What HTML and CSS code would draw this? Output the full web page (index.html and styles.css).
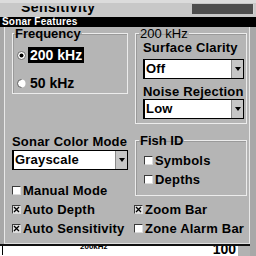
FILE: index.html
```html
<!DOCTYPE html>
<html>
<head>
<meta charset="utf-8">
<link rel="stylesheet" href="styles.css">
</head>
<body>
<div class="top">
  <div class="sens-clip"><span class="sens">Sensitivity</span></div>
  <div class="top-dark"></div>
</div>
<div class="title">Sonar Features</div>
<div class="panel">
  <fieldset class="group freq">
    <legend class="lg-freq">Frequency</legend>
    <div class="radio-row first">
      <svg class="radio" width="9" height="9" viewBox="0 0 9 9"><circle cx="4.5" cy="4.5" r="4" fill="#fff" stroke="#6a6a6a"/><circle cx="4.5" cy="4.5" r="2" fill="#000"/></svg>
      <span class="opt selected">200 kHz</span>
    </div>
    <div class="radio-row second">
      <svg class="radio" width="9" height="9" viewBox="0 0 9 9"><circle cx="4.5" cy="4.5" r="4" fill="#fff"/><path d="M4.5 0.5 A4 4 0 0 0 4.5 8.5" fill="none" stroke="#5a5a5a"/></svg>
      <span class="opt">50 kHz</span>
    </div>
  </fieldset>
  <fieldset class="group khz">
    <legend class="lg-khz">200 kHz</legend>
    <div class="label">Surface Clarity</div>
    <div class="select s1"><span class="select-text">Off</span><span class="select-btn"><span class="tri"></span></span></div>
    <div class="label gap">Noise Rejection</div>
    <div class="select"><span class="select-text">Low</span><span class="select-btn"><span class="tri"></span></span></div>
  </fieldset>
  <div class="color-mode">
    <div class="label">Sonar Color Mode</div>
    <div class="select s2"><span class="select-text">Grayscale</span><span class="select-btn"><span class="tri"></span></span></div>
    <div class="check-row manual"><span class="box"></span>Manual Mode</div>
  </div>
  <fieldset class="group fish">
    <legend class="lg-fish">Fish ID</legend>
    <div class="check-row sym"><span class="box"></span>Symbols</div>
    <div class="check-row"><span class="box"></span>Depths</div>
  </fieldset>
  <div class="check-row"><span class="box checked"><svg width="7" height="7" viewBox="0 0 7 7"><path d="M1 1 L6 6 M6 1 L1 6" stroke="#000" stroke-width="1.3"/></svg></span>Auto Depth</div>
  <div class="check-row"><span class="box checked"><svg width="7" height="7" viewBox="0 0 7 7"><path d="M1 1 L6 6 M6 1 L1 6" stroke="#000" stroke-width="1.3"/></svg></span>Zoom Bar</div>
  <div class="check-row"><span class="box checked"><svg width="7" height="7" viewBox="0 0 7 7"><path d="M1 1 L6 6 M6 1 L1 6" stroke="#000" stroke-width="1.3"/></svg></span>Auto Sensitivity</div>
  <div class="check-row"><span class="box"></span>Zone Alarm Bar</div>
</div>
<div class="status">
  <span class="tick"></span>
  <span class="freq-small">200kHz</span>
  <span class="depth">100</span>
  <span class="status-grey"></span>
</div>
</body>
</html>
```
FILE: styles.css
```css
html, body {
  margin: 0;
  padding: 0;
}
body {
  width: 256px;
  height: 256px;
  overflow: hidden;
  background: #a8a8a8;
  font-family: "Liberation Sans", Arial, sans-serif;
  color: #000;
}
.top {
  height: 17px;
  display: flex;
  background: #c8c8c8;
  box-sizing: border-box;
  border-top: 3px solid #dcdcdc;
}
.sens-clip {
  margin-top: 3px;
  margin-left: 21px;
  height: 11px;
  width: 150px;
  overflow: hidden;
}
.sens {
  display: block;
  margin-top: -6px;
  font: bold 14px/14px "Liberation Sans", Arial, sans-serif;
  letter-spacing: 0.4px;
}
.top-dark {
  margin-left: auto;
  margin-top: 1px;
  margin-right: 2px;
  width: 61px;
  height: 10px;
  background: #4e4e4e;
  border-right: 1px solid #d4d4d4;
}
.title {
  height: 10px;
  background: #000;
  color: #fff;
  font: bold 10px/10px "Liberation Sans", Arial, sans-serif;
  letter-spacing: 0.2px;
  padding-left: 2px;
  white-space: nowrap;
}
.panel {
  margin-left: 4px;
  width: 246px;
  height: 217px;
  box-sizing: border-box;
  border-left: 1px solid #e8e8e8;
  border-right: 1px solid #e8e8e8;
  border-bottom: 1px solid #e0e0e0;
  background: #b5b5b5;
  padding-left: 7px;
  display: grid;
  grid-template-columns: 116px 113px;
  column-gap: 6px;
  align-items: start;
  align-content: start;
}
fieldset.group {
  margin: 0;
  min-width: 0;
  box-sizing: border-box;
  border: 1px solid #ececec;
  box-shadow: inset 1px 1px 0 #9a9a9a;
}
legend {
  padding: 0 1px;
  font: bold 13px/13px "Liberation Sans", Arial, sans-serif;
  white-space: nowrap;
}
.freq {
  width: 116px;
  padding: 0 2px 2px 4px;
}
.lg-freq { margin-left: -3px; }
.khz {
  width: 112px;
  margin-left: 1px !important;
  padding: 0 2px 4px 7px;
  margin-bottom: 10px !important;
}
.lg-khz {
  margin-left: -4px;
  font-weight: normal;
}
.fish {
  width: 112px;
  margin-left: 1px !important;
  padding: 0 2px 6px 8px;
}
.lg-fish { margin-left: -5px; }
.radio-row {
  display: flex;
  align-items: center;
  height: 16px;
}
.radio-row.first { margin-top: 7px; }
.radio-row.second { margin-top: 12px; }
.radio {
  display: block;
  margin-right: 2px;
  flex: none;
}
.opt {
  font: bold 14px/16px "Liberation Sans", Arial, sans-serif;
  padding: 0 2px;
  white-space: nowrap;
}
.opt.selected {
  background: #000;
  color: #fff;
}
.label {
  font: bold 13px/15px "Liberation Sans", Arial, sans-serif;
  white-space: nowrap;
  letter-spacing: 0.2px;
}
.label.gap { margin-top: 5px; }
.select {
  display: flex;
  height: 20px;
  box-sizing: border-box;
  border: 1px solid #000;
  border-left-width: 2px;
  background: #fff;
}
.select.s1 { margin-top: 4px; }
.select.s2 { margin-top: 1px; }
.select-text {
  flex: 1;
  padding-left: 1px;
  font: bold 13px/18px "Liberation Sans", Arial, sans-serif;
  letter-spacing: 0.2px;
  white-space: nowrap;
}
.select-btn {
  width: 11px;
  background: #c6c6c6;
  border-left: 1px solid #8a8a8a;
  display: flex;
  align-items: center;
  justify-content: center;
}
.tri {
  width: 0;
  height: 0;
  border-left: 3px solid transparent;
  border-right: 3px solid transparent;
  border-top: 4px solid #000;
}
.check-row {
  display: flex;
  align-items: center;
  height: 19px;
  font: bold 13px/19px "Liberation Sans", Arial, sans-serif;
  letter-spacing: 0.2px;
  white-space: nowrap;
}
.check-row.manual { margin-top: 11px; }
.check-row.sym { margin-top: 4px; }
.box {
  width: 9px;
  height: 9px;
  box-sizing: border-box;
  margin-right: 2px;
  flex: none;
  background: #fff;
  border-top: 1px solid #3a3a3a;
  border-left: 1px solid #3a3a3a;
  border-right: 1px solid #dcdcdc;
  border-bottom: 1px solid #dcdcdc;
  display: flex;
  align-items: center;
  justify-content: center;
}
.box.checked {
  background: #e2e2e2;
}
.box svg { display: block; }
.status {
  height: 12px;
  box-sizing: border-box;
  border-top: 2px solid #111;
  background: #fff;
  display: flex;
  overflow: hidden;
  width: 250px;
}
.tick {
  margin-left: 2px;
  width: 1px;
  height: 9px;
  background: #000;
  flex: none;
}
.freq-small {
  margin-left: 77px;
  margin-top: -3px;
  font: bold 8px/8px "Liberation Sans", Arial, sans-serif;
}
.depth {
  margin-left: auto;
  margin-top: -4px;
  font: bold 14px/14px "Liberation Sans", Arial, sans-serif;
}
.status-grey {
  margin-left: 2px;
  width: 12px;
  background: #b2b2b2;
  flex: none;
}
```
